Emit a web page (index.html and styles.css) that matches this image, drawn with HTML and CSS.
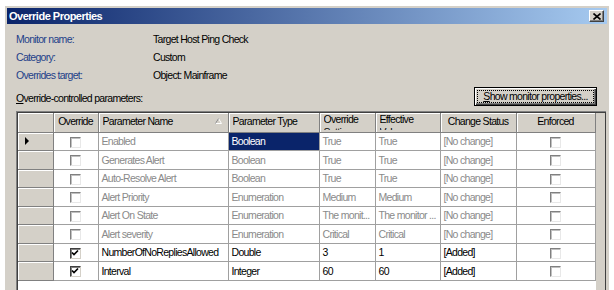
FILE: index.html
```html
<!DOCTYPE html>
<html lang="en">

<head>
  <meta charset="UTF-8" />
  <title>Override Properties</title>
  <link rel="stylesheet" href="styles.css">
</head>

<body>
  <div class="dialog">
    <div class="titlebar">
      <span class="title">Override Properties</span>
      <span class="close-btn">
        <svg width="8" height="7" viewBox="0 0 8 7">
          <path d="M0.5 0.5 L7.5 6.5 M7.5 0.5 L0.5 6.5" stroke="#000" stroke-width="1.6" />
        </svg>
      </span>
    </div>

    <div class="content">
      <div class="info">
        <div class="info-row"><span class="info-label">Monitor name:</span><span>Target Host Ping Check</span></div>
        <div class="info-row"><span class="info-label">Category:</span><span>Custom</span></div>
        <div class="info-row"><span class="info-label">Overrides target:</span><span>Object: Mainframe</span></div>
      </div>

      <div class="grid-toolbar">
        <span class="grid-caption"><u>O</u>verride-controlled parameters:</span>
        <button class="btn-default"><span class="focus"><u>S</u>how monitor properties...</span></button>
      </div>

      <div class="grid">
        <table class="params">
          <colgroup>
            <col style="width:35px">
            <col style="width:45px">
            <col style="width:130px">
            <col style="width:91px">
            <col style="width:56px">
            <col style="width:65px">
            <col style="width:76px">
            <col style="width:79px">
          </colgroup>
          <thead>
            <tr>
              <th class="corner"></th>
              <th class="center"><div class="hd">Override</div></th>
              <th><div class="hd sortable">Parameter Name
                  <svg class="sort" width="7" height="6" viewBox="0 0 7 6">
                    <path d="M3.5 0.5 L6.5 5.5 L0.5 5.5 Z" fill="none" stroke="#fff" stroke-width="1" />
                    <path d="M3.5 0.5 L0.5 5.5" stroke="#808080" stroke-width="1" />
                  </svg>
                </div></th>
              <th><div class="hd">Parameter Type</div></th>
              <th><div class="hd wrap">Override Setting</div></th>
              <th><div class="hd wrap">Effective Value</div></th>
              <th class="center"><div class="hd">Change Status</div></th>
              <th class="center"><div class="hd">Enforced</div></th>
            </tr>
          </thead>
          <tbody>
            <tr class="disabled">
              <td class="row-head"><span class="pointer"></span></td>
              <td class="center"><span class="cb"></span></td>
              <td>Enabled</td>
              <td class="selected">Boolean</td>
              <td>True</td>
              <td>True</td>
              <td>[No change]</td>
              <td class="center"><span class="cb"></span></td>
            </tr>
            <tr class="disabled">
              <td class="row-head"></td>
              <td class="center"><span class="cb"></span></td>
              <td>Generates Alert</td>
              <td>Boolean</td>
              <td>True</td>
              <td>True</td>
              <td>[No change]</td>
              <td class="center"><span class="cb"></span></td>
            </tr>
            <tr class="disabled">
              <td class="row-head"></td>
              <td class="center"><span class="cb"></span></td>
              <td>Auto-Resolve Alert</td>
              <td>Boolean</td>
              <td>True</td>
              <td>True</td>
              <td>[No change]</td>
              <td class="center"><span class="cb"></span></td>
            </tr>
            <tr class="disabled">
              <td class="row-head"></td>
              <td class="center"><span class="cb"></span></td>
              <td>Alert Priority</td>
              <td>Enumeration</td>
              <td>Medium</td>
              <td>Medium</td>
              <td>[No change]</td>
              <td class="center"><span class="cb"></span></td>
            </tr>
            <tr class="disabled">
              <td class="row-head"></td>
              <td class="center"><span class="cb"></span></td>
              <td>Alert On State</td>
              <td>Enumeration</td>
              <td>The monit...</td>
              <td>The monitor ...</td>
              <td>[No change]</td>
              <td class="center"><span class="cb"></span></td>
            </tr>
            <tr class="disabled">
              <td class="row-head"></td>
              <td class="center"><span class="cb"></span></td>
              <td>Alert severity</td>
              <td>Enumeration</td>
              <td>Critical</td>
              <td>Critical</td>
              <td>[No change]</td>
              <td class="center"><span class="cb"></span></td>
            </tr>
            <tr>
              <td class="row-head"></td>
              <td class="center"><span class="cb checked"><svg width="8" height="8" viewBox="0 0 8 8"><path d="M1 3.5 L3 5.5 L7 1.5" fill="none" stroke="#000" stroke-width="1.7" /></svg></span></td>
              <td>NumberOfNoRepliesAllowed</td>
              <td>Double</td>
              <td>3</td>
              <td>1</td>
              <td>[Added]</td>
              <td class="center"><span class="cb"></span></td>
            </tr>
            <tr>
              <td class="row-head"></td>
              <td class="center"><span class="cb checked"><svg width="8" height="8" viewBox="0 0 8 8"><path d="M1 3.5 L3 5.5 L7 1.5" fill="none" stroke="#000" stroke-width="1.7" /></svg></span></td>
              <td>Interval</td>
              <td>Integer</td>
              <td>60</td>
              <td>60</td>
              <td>[Added]</td>
              <td class="center"><span class="cb"></span></td>
            </tr>
          </tbody>
        </table>
        <div class="grid-side"></div>
      </div>
    </div>
  </div>
</body>

</html>
```

FILE: styles.css
```css
* {
  box-sizing: border-box;
  margin: 0;
  padding: 0;
}

body {
  background: #ffffff;
  font-family: "Liberation Sans", Arial, sans-serif;
  font-size: 10.5px;
  letter-spacing: -0.7px;
  color: #000000;
  overflow: hidden;
}

.dialog {
  margin: 6px 5px 0 5px;
  height: 290px;
  background: #d4d0c8;
  border: 1px solid #d4d0c8;
  border-bottom: none;
  padding: 1px 1px 0 1px;
}

/* Title bar */
.titlebar {
  height: 16px;
  display: flex;
  align-items: center;
  justify-content: space-between;
  padding: 0 3px 0 2px;
  background: linear-gradient(to right, #0a246a, #a6caf0);
}

.title {
  color: #ffffff;
  font-weight: 700;
  font-size: 11px;
  letter-spacing: -0.5px;
}

.close-btn {
  width: 15px;
  height: 12px;
  display: flex;
  align-items: center;
  justify-content: center;
  background: #d4d0c8;
  border: 1px solid;
  border-color: #ffffff #404040 #404040 #ffffff;
  box-shadow: inset -1px -1px #808080;
}

.content {
  padding: 6px 1px 0 9px;
}

/* Monitor info */
.info-row {
  display: flex;
  height: 18px;
  line-height: 18px;
}

.info-label {
  width: 137px;
  color: #233f88;
}

/* Toolbar above grid */
.grid-toolbar {
  display: flex;
  justify-content: space-between;
  align-items: flex-end;
  margin-top: 3px;
  height: 19px;
}

.grid-caption {
  line-height: 13px;
  padding-bottom: 1px;
}

.btn-default {
  width: 123px;
  height: 19px;
  margin-right: 9px;
  background: #d4d0c8;
  border: 1px solid #000000;
  box-shadow: inset 1px 1px #ffffff, inset -1px -1px #404040, inset -2px -2px #808080;
  font: inherit;
  letter-spacing: inherit;
  color: #000000;
  padding: 2px;
  display: flex;
}

.btn-default .focus {
  flex: 1;
  border: 1px dotted #000000;
  line-height: 11px;
}

/* Data grid */
.grid {
  margin-top: 5px;
  height: 190px;
  display: flex;
  background: #ffffff;
  border-left: 1px solid #808080;
  border-top: 1px solid #808080;
  box-shadow: inset 1px 1px #404040;
  padding: 1px 0 0 1px;
}

.grid-side {
  flex: 1;
  background: #d4d0c8;
  border-right: 1px solid #404040;
}

.params {
  border-collapse: collapse;
  table-layout: fixed;
  width: 577px;
  align-self: flex-start;
}

.params th {
  height: 19px;
  background: #d4d0c8;
  font-weight: normal;
  text-align: left;
  vertical-align: top;
  border-right: 1px solid #808080;
  border-bottom: 1px solid #808080;
  box-shadow: inset 1px 1px #ffffff;
  padding: 0 4px;
}

.params th.center {
  text-align: center;
}

.hd {
  height: 18px;
  line-height: 12px;
  padding-top: 2px;
  overflow: hidden;
  white-space: nowrap;
}

.hd.wrap {
  white-space: normal;
  line-height: 13px;
  padding-top: 0;
  height: 17px;
}

.hd.sortable {
  display: flex;
  justify-content: space-between;
  align-items: flex-start;
}

.sort {
  margin: 3px 2px 0 0;
}

.params td {
  height: 18.5px;
  padding: 0 3px;
  background: #ffffff;
  border-right: 1px solid #a0a0a0;
  border-bottom: 1px solid #a0a0a0;
  white-space: nowrap;
  overflow: hidden;
  vertical-align: middle;
}

.params td.center {
  text-align: center;
}

.params td.row-head {
  background: #d4d0c8;
  border-right: 1px solid #808080;
  border-bottom: 1px solid #808080;
  box-shadow: inset 1px 1px #ffffff;
}

.params tr.disabled td {
  color: #8a8a8a;
}

.params td.selected {
  background: #0a246a;
  color: #ffffff !important;
}

.pointer {
  display: block;
  width: 0;
  height: 0;
  margin-left: 4px;
  border-top: 4px solid transparent;
  border-bottom: 4px solid transparent;
  border-left: 4px solid #000000;
}

.cb {
  display: inline-block;
  width: 11px;
  height: 11px;
  vertical-align: middle;
  background: #ffffff;
  border: 1px solid;
  border-color: #808080 #e8e8e8 #e8e8e8 #808080;
  box-shadow: inset 1px 1px #c0c0c0;
}

.cb.checked {
  border-color: #404040 #d4d0c8 #d4d0c8 #404040;
  box-shadow: inset 1px 1px #808080;
  position: relative;
}

.cb.checked svg {
  position: absolute;
  left: 0;
  top: 0;
}
```
